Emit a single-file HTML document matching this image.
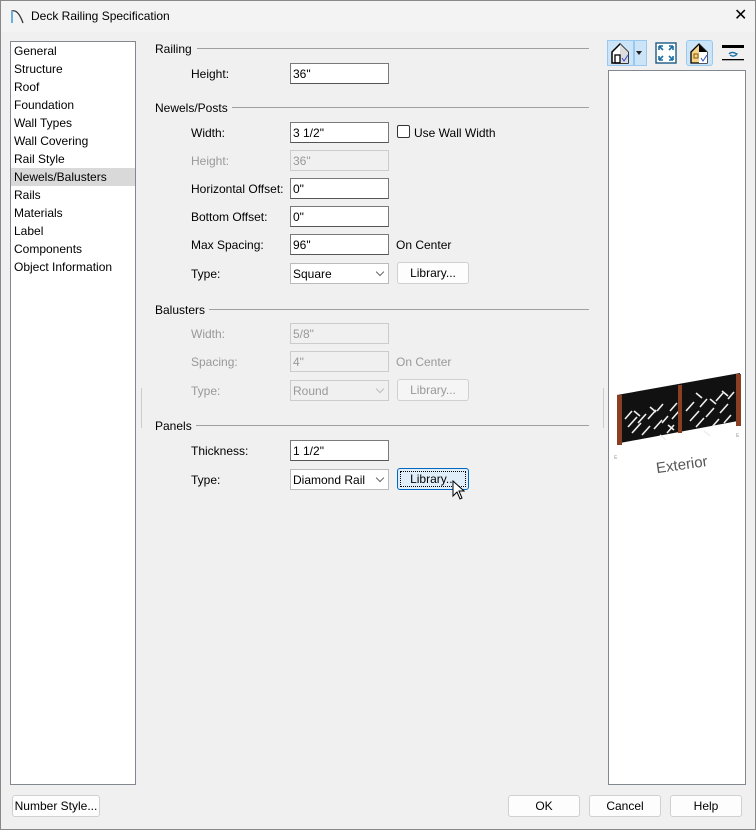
<!DOCTYPE html>
<html><head><style>
*{box-sizing:border-box}
body{margin:0;width:756px;height:830px;background:#f0f0f0;font:12px "Liberation Sans",sans-serif;color:#000;position:relative;overflow:hidden}
.a{position:absolute;white-space:nowrap}
.tb{left:0;top:0;width:756px;height:32px;background:#f3f3f3}
.list{left:10px;top:41px;width:126px;height:744px;background:#fff;border:1px solid #828790}
.list div{height:18px;line-height:18px;padding-left:3px}
.sel{background:#d9d9d9}
.hd{line-height:14px}
.ln{height:1px;background:#a0a0a0}
.in{width:99px;height:21px;background:#fff;border:1px solid #7a7a7a;border-bottom-color:#555;padding:3px 2px;line-height:14px}
.dis{background:#f0f0f0;border-color:#ccc;color:#999}
.lb{line-height:14px}
.g{color:#999}
.btn{height:22px;background:#fdfdfd;border:1px solid #d0d0d0;border-radius:3px;text-align:center;line-height:20px}
.bdis{color:#999;background:#f5f5f5}
.chev{position:absolute;right:5px;top:5px;width:6px;height:6px;border-right:1px solid #666;border-bottom:1px solid #666;transform:rotate(45deg)}
</style></head><body>
<div class="a tb"></div>
<div class="a" style="left:0;top:0;width:756px;height:830px;border:1px solid #888;z-index:5;pointer-events:none"></div>
<svg class="a" style="left:10px;top:8px" width="14" height="16"><path d="M2 15V3Q8 1 13 15" fill="none" stroke="#333" stroke-width="1.3"/><path d="M2 15V3" stroke="#6ab0e0" stroke-width="2"/></svg>
<div class="a" style="left:31px;top:9px;font-size:12px">Deck Railing Specification</div>
<div class="a" style="left:734px;top:5px;font-size:16px">✕</div>

<div class="a list">
<div>General</div><div>Structure</div><div>Roof</div><div>Foundation</div><div>Wall Types</div><div>Wall Covering</div><div>Rail Style</div><div class="sel">Newels/Balusters</div><div>Rails</div><div>Materials</div><div>Label</div><div>Components</div><div>Object Information</div>
</div>

<div class="a hd" style="left:155px;top:42px">Railing</div><div class="a ln" style="left:197px;top:48px;width:392px"></div>
<div class="a lb" style="left:191px;top:67px">Height:</div><div class="a in" style="left:290px;top:63px">36"</div>

<div class="a hd" style="left:155px;top:101px">Newels/Posts</div><div class="a ln" style="left:232px;top:107px;width:357px"></div>
<div class="a lb" style="left:191px;top:126px">Width:</div><div class="a in" style="left:290px;top:122px">3 1/2"</div>
<div class="a" style="left:397px;top:125px;width:13px;height:13px;border:1px solid #333;background:#fff;border-radius:2px"></div><div class="a lb" style="left:414px;top:126px">Use Wall Width</div>
<div class="a lb g" style="left:191px;top:154px">Height:</div><div class="a in dis" style="left:290px;top:150px">36"</div>
<div class="a lb" style="left:191px;top:182px">Horizontal Offset:</div><div class="a in" style="left:290px;top:178px">0"</div>
<div class="a lb" style="left:191px;top:210px">Bottom Offset:</div><div class="a in" style="left:290px;top:206px">0"</div>
<div class="a lb" style="left:191px;top:238px">Max Spacing:</div><div class="a in" style="left:290px;top:234px">96"</div><div class="a lb" style="left:396px;top:238px">On Center</div>
<div class="a lb" style="left:191px;top:267px">Type:</div><div class="a in" style="left:290px;top:263px;border-color:#bbb">Square<span class="chev"></span></div>
<div class="a btn" style="left:397px;top:262px;width:72px">Library...</div>

<div class="a hd" style="left:155px;top:303px">Balusters</div><div class="a ln" style="left:209px;top:309px;width:380px"></div>
<div class="a lb g" style="left:191px;top:327px">Width:</div><div class="a in dis" style="left:290px;top:323px">5/8"</div>
<div class="a lb g" style="left:191px;top:355px">Spacing:</div><div class="a in dis" style="left:290px;top:351px">4"</div><div class="a lb g" style="left:396px;top:355px">On Center</div>
<div class="a lb g" style="left:191px;top:384px">Type:</div><div class="a in dis" style="left:290px;top:380px">Round<span class="chev" style="border-color:#bbb"></span></div>
<div class="a btn bdis" style="left:397px;top:379px;width:72px">Library...</div>

<div class="a hd" style="left:155px;top:419px">Panels</div><div class="a ln" style="left:196px;top:425px;width:393px"></div>
<div class="a lb" style="left:191px;top:444px">Thickness:</div><div class="a in" style="left:290px;top:440px">1 1/2"</div>
<div class="a lb" style="left:191px;top:473px">Type:</div><div class="a in" style="left:290px;top:469px;border-color:#bbb">Diamond Rail<span class="chev"></span></div>
<div class="a btn" style="left:397px;top:468px;width:72px;border:1px solid #0067c0;background:#e0eef9;outline:1px dotted #000;outline-offset:-4px">Library...</div>
<svg class="a" style="left:452px;top:480px" width="16" height="22"><path d="M1 1V16L5 12L8 19L10 18L7 11H12Z" fill="#fff" stroke="#000"/></svg>

<div class="a" style="left:141px;top:388px;width:1px;height:40px;background:#ccc"></div>
<div class="a" style="left:603px;top:388px;width:1px;height:40px;background:#ccc"></div>

<div class="a" style="left:607px;top:40px;width:27px;height:26px;background:#cce4f7;border:1px solid #99c9ef"></div>
<div class="a" style="left:634px;top:40px;width:13px;height:26px;background:#cce4f7;border:1px solid #99c9ef"></div>
<svg class="a" style="left:610px;top:42px" width="36" height="22"><path d="M2 10L10 2L18 10V21H2Z" fill="#fff" stroke="#000" stroke-width="1.5"/><path d="M10 2L18 10V21H10Z" fill="#ddd"/><rect x="5" y="13" width="5" height="8" fill="none" stroke="#000" stroke-width="1.3"/><path d="M12 16l2 3l4-6" stroke="#2a4bd0" fill="none"/><path d="M26 9h6l-3 4z" fill="#222"/></svg>
<svg class="a" style="left:655px;top:42px" width="22" height="22"><rect x="1" y="1" width="20" height="20" fill="#fff" stroke="#1c5a84" stroke-width="1.4"/><path d="M4 4l4 4M4 4h4M4 4v4M18 4l-4 4M18 4h-4M18 4v4M4 18l4-4M4 18h4M4 18v-4M18 18l-4-4M18 18h-4M18 18v-4" stroke="#1c6ea4" stroke-width="1.6" fill="none"/></svg>
<div class="a" style="left:686px;top:40px;width:27px;height:26px;background:#cce4f7;border:1px solid #99c9ef;border-radius:3px"></div>
<svg class="a" style="left:689px;top:42px" width="22" height="22"><path d="M2 10L10 2L18 10V21H2Z" fill="#f6d48b" stroke="#000" stroke-width="1.3"/><path d="M10 2L18 10V21H10Z" fill="#fff"/><path d="M10 2L18 10H10Z" fill="#000"/><rect x="5" y="12" width="4" height="4" fill="none" stroke="#8a5a00"/><path d="M12 16l2 3l4-6" stroke="#2a4bd0" fill="none"/></svg>
<svg class="a" style="left:721px;top:44px" width="24" height="18"><rect x="1" y="1" width="22" height="3" fill="#000"/><path d="M8 10a4 3 0 0 1 7 0M16 9a4 3 0 0 1 -7 2" stroke="#1c6ea4" fill="none" stroke-width="1.3"/><rect x="1" y="15" width="22" height="1.3" fill="#000"/></svg>

<div class="a" style="left:608px;top:70px;width:138px;height:715px;background:#fff;border:1px solid #828790"></div>
<svg class="a" style="left:612px;top:371px" width="130" height="110">
<path d="M5 24L128 2V9L5 31Z" fill="#111"/>
<path d="M8 30L126 8V50L8 72Z" fill="#111"/>
<g stroke="#eee" stroke-width="1.6">
<path d="M13 48l7-8M16 56l9-10M20 62l9-10M26 52l8-9M30 64l8-9M36 48l8-9M42 58l8-9M45 40l6-7M50 52l6-7M55 62l7-8M58 40l7-8M60 48l7-8M38 36l6 5M48 64l6 5M22 40l6 5M56 54l6 5
M74 40l8-9M78 50l9-10M84 56l8-9M88 36l7-8M94 46l8-9M100 56l7-8M104 30l7-8M108 42l8-9M112 52l7-8M116 28l6-7M98 28l6 5M84 22l6 5M110 20l6 5M92 60l6 5"/>
</g>
<rect x="5" y="24" width="5" height="50" fill="#8a3f22"/><rect x="66" y="14" width="4" height="48" fill="#8a3f22"/><rect x="124" y="3" width="5" height="52" fill="#8a3f22"/>
<text x="2" y="88" font-family="Liberation Sans" font-size="5" fill="#999">E</text>
<text x="124" y="66" font-family="Liberation Sans" font-size="5" fill="#999">E</text>
<text x="44" y="100" font-family="Liberation Sans" font-size="15" fill="#555" transform="rotate(-8 60 95)">Exterior</text>
</svg>

<div class="a btn" style="left:12px;top:795px;width:88px">Number Style...</div>
<div class="a btn" style="left:508px;top:795px;width:72px">OK</div>
<div class="a btn" style="left:589px;top:795px;width:72px">Cancel</div>
<div class="a btn" style="left:670px;top:795px;width:72px">Help</div>
</body></html>
